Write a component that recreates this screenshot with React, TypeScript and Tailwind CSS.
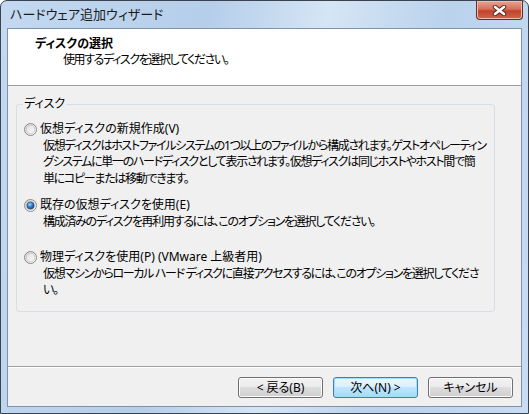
import { useId } from "react";

function Radio({ checked }: { checked?: boolean }) {
  const id = useId().replace(/:/g, "");
  return (
    <svg width="13" height="13" viewBox="0 0 13 13" className="shrink-0">
      <defs>
        <linearGradient id={`ring-${id}`} x1="0" y1="0" x2="1" y2="1">
          <stop offset="0" stopColor="#d2d2d2" />
          <stop offset="1" stopColor="#fdfdfd" />
        </linearGradient>
        <linearGradient id={`in-${id}`} x1="0" y1="0" x2="1" y2="1">
          <stop offset="0" stopColor="#e0e0e0" />
          <stop offset="1" stopColor="#fafafa" />
        </linearGradient>
        <radialGradient id={`dot-${id}`} cx="0.4" cy="0.35" r="0.7">
          <stop offset="0" stopColor="#9fd5ff" />
          <stop offset="0.45" stopColor="#3b8ad8" />
          <stop offset="1" stopColor="#123f7d" />
        </radialGradient>
      </defs>
      <circle cx="6.5" cy="6.5" r="6" fill={`url(#ring-${id})`} stroke="#8c8c8c" strokeWidth="1" />
      <circle cx="6.5" cy="6.5" r="4.2" fill={`url(#in-${id})`} stroke="#b9b9b9" strokeWidth="0.6" />
      {checked ? <circle cx="6.5" cy="6.5" r="3.6" fill={`url(#dot-${id})`} stroke="#1b3f6e" strokeWidth="0.6" /> : null}
    </svg>
  );
}

function Option({
  label,
  lines,
  checked,
  className,
}: {
  label: string;
  lines: string[];
  checked?: boolean;
  className?: string;
}) {
  return (
    <div className={className}>
      <div className="flex items-center gap-[3px] pl-[7px]">
        <Radio checked={checked} />
        <span>{label}</span>
      </div>
      <div className="pl-[26px] tracking-[-1.3px]">
        {lines.map((line) => (
          <div key={line}>{line}</div>
        ))}
      </div>
    </div>
  );
}

function WinButton({ children, isDefault }: { children: React.ReactNode; isDefault?: boolean }) {
  return (
    <button
      type="button"
      className={`h-[21px] w-[85px] rounded-[3px] border text-[12px] leading-[16px] text-black ${
        isDefault
          ? "border-[#3c7fb1] bg-[linear-gradient(to_bottom,#eaf6fd_0%,#d9f0fc_50%,#bee6fd_50%,#a7d9f5_100%)] shadow-[inset_0_0_0_1px_#9fe0fb]"
          : "border-[#707070] bg-[linear-gradient(to_bottom,#f2f2f2_0%,#ebebeb_50%,#dddddd_50%,#cfcfcf_100%)] shadow-[inset_0_0_0_1px_#fbfbfb]"
      }`}
    >
      {children}
    </button>
  );
}

export default function App() {
  return (
    <div className="h-[414px] w-[529px] whitespace-nowrap bg-white font-['Noto_Sans','Noto_Sans_CJK_JP',sans-serif] text-[12px] leading-[16.5px] text-black [font-feature-settings:'palt']">
      <div className="relative flex h-full w-full flex-col rounded-t-[7px] border border-[#3b4350] bg-[linear-gradient(100deg,#c3d9f1_0%,#b5cee9_35%,#d5e5f5_55%,#bad2ec_75%,#c8dcf2_100%)]">
        <div className="h-[27px] shrink-0 pl-[9px] pt-[5px] text-[13px] leading-[17px] text-[#1b1b1b]">
          ハードウェア追加ウィザード
        </div>
        <div className="absolute right-[5px] top-0 flex h-[19px] w-[47px] items-center justify-center rounded-b-[4px] border border-t-0 border-[#6b2a22] bg-[linear-gradient(to_bottom,#e8a493_0%,#d5705a_45%,#c0432a_55%,#d3654c_100%)] shadow-[inset_0_0_0_1px_#eebcb0]">
          <svg width="15" height="11" viewBox="0 0 15 11">
            <path d="M3 2 L12 9 M12 2 L3 9" stroke="#5a2018" strokeWidth="4.4" strokeLinecap="round" />
            <path d="M3 2 L12 9 M12 2 L3 9" stroke="#ffffff" strokeWidth="2.6" strokeLinecap="round" />
          </svg>
        </div>
        <div className="mx-[6px] mb-[6px] flex flex-1 flex-col border border-[#7e93ab] bg-[#f0f0f0]">
          <div className="h-[57px] shrink-0 border-b border-[#a0a0a0] bg-white pt-[7px]">
            <div className="pl-[27px] font-bold leading-[16px]">ディスクの選択</div>
            <div className="pl-[55px] leading-[16px] tracking-[-1.4px]">使用するディスクを選択してください。</div>
          </div>
          <div className="flex-1">
            <fieldset className="ml-[8px] mr-[26px] mt-[10px] rounded-[3px] border border-[#d5dfe5] pb-[12px] pt-[9px]">
              <legend className="ml-[6px] px-[1px] leading-[16px]">ディスク</legend>
              <Option
                label="仮想ディスクの新規作成(V)"
                lines={[
                  "仮想ディスクはホストファイルシステムの1つ以上のファイルから構成されます。ゲストオペレーティン",
                  "グシステムに単一のハードディスクとして表示されます。仮想ディスクは同じホストやホスト間で簡",
                  "単にコピーまたは移動できます。",
                ]}
              />
              <Option
                className="mt-[10px]"
                checked
                label="既存の仮想ディスクを使用(E)"
                lines={["構成済みのディスクを再利用するには、このオプションを選択してください。"]}
              />
              <Option
                className="mt-[19px]"
                label="物理ディスクを使用(P) (VMware 上級者用)"
                lines={[
                  "仮想マシンからローカル ハード ディスクに直接アクセスするには、このオプションを選択してくださ",
                  "い。",
                ]}
              />
            </fieldset>
          </div>
          <div className="shrink-0 border-t border-[#a0a0a0]">
            <div className="flex justify-end gap-[10px] border-t border-white pb-[8px] pr-[8px] pt-[9px]">
              <WinButton>&lt; 戻る(B)</WinButton>
              <WinButton isDefault>次へ(N) &gt;</WinButton>
              <WinButton>キャンセル</WinButton>
            </div>
          </div>
        </div>
      </div>
    </div>
  );
}
